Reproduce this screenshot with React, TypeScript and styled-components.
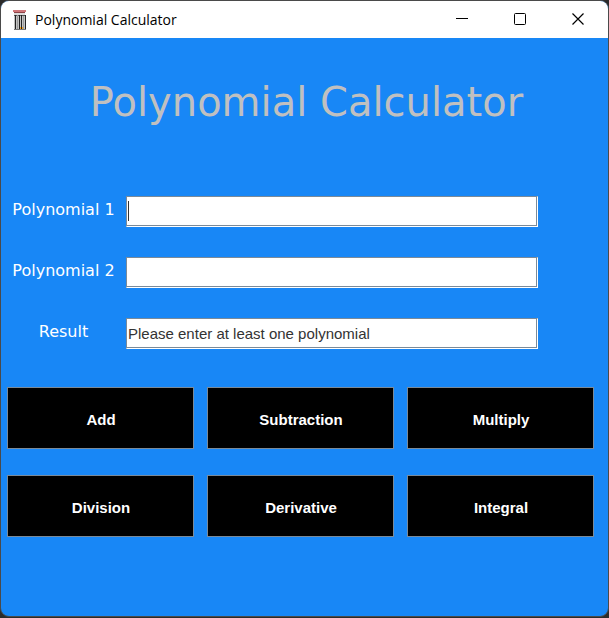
import React from "react";
import styled, { createGlobalStyle } from "styled-components";

const GlobalStyle = createGlobalStyle`
  *, *::before, *::after { box-sizing: border-box; }
  html, body, #root { height: 100%; }
  body { margin: 0; background: #2b2b2b; }
`;

const Window = styled.div`
  display: flex;
  flex-direction: column;
  height: calc(100% - 1px);
  border: 1px solid #4a4a4a;
  border-radius: 9px;
  overflow: hidden;
  background: #1887f6;
`;

const TitleBar = styled.header`
  display: flex;
  align-items: center;
  flex: none;
  height: 37px;
  padding: 0 1px 0 12px;
  background: #fff;
`;

const WindowTitle = styled.span`
  flex: 1;
  padding-left: 8px;
  color: #000;
  font: 14px/20px "Open Sans", "Noto Sans", sans-serif;
`;

const CaptionButton = styled.button`
  display: flex;
  align-items: center;
  justify-content: center;
  width: 58px;
  height: 37px;
  padding: 0 0 2px;
  border: 0;
  background: transparent;
`;

const Content = styled.main`
  display: flex;
  flex-direction: column;
  padding: 40px 14px 0 6px;
`;

const Heading = styled.h1`
  margin: 0 0 70px;
  padding-left: 12px;
  color: #c0c0c0;
  text-align: center;
  white-space: nowrap;
  font: 400 40px/48px Verdana, "DejaVu Sans", sans-serif;
`;

const Form = styled.form`
  display: flex;
  flex-direction: column;
`;

const Fields = styled.div`
  display: grid;
  row-gap: 30px;
  padding-right: 56px;
`;

const Row = styled.div`
  display: grid;
  grid-template-columns: 119px 1fr;
  align-items: center;
`;

const Label = styled.label`
  padding: 0 6px 4px 0;
  color: #fff;
  text-align: center;
  white-space: nowrap;
  font: 16px/20px Verdana, "DejaVu Sans", sans-serif;
`;

const FieldBox = styled.div`
  position: relative;
  display: flex;
`;

const Field = styled.input`
  width: 100%;
  height: 31px;
  padding: 0 2px 0 1px;
  border: 1px solid #fff;
  border-top-color: #7a8a99;
  border-left-color: #7a8a99;
  border-radius: 0;
  outline: 0;
  background: #fff;
  box-shadow: inset -1px -1px 0 #7a8a99;
  color: #333;
  font: 15px/20px Arial, "Liberation Sans", sans-serif;
`;

const Caret = styled.span`
  position: absolute;
  left: 2px;
  top: 5px;
  width: 1px;
  height: 20px;
  background: #333;
  pointer-events: none;

  ${Field}:focus + & { display: none; }
`;

const Actions = styled.div`
  display: grid;
  grid-template-columns: repeat(3, 1fr);
  gap: 26px 13px;
  margin-top: 38px;
`;

const ActionButton = styled.button`
  height: 62px;
  padding: 3px 0 0 1px;
  border: 1px solid #7a8a99;
  border-radius: 0;
  background: #000;
  color: #fff;
  font: bold 15px/20px Arial, "Liberation Sans", sans-serif;
`;

const AppIcon = () => (
  <svg width="14" height="20" viewBox="0 0 14 20" shapeRendering="crispEdges" aria-hidden="true">
    <rect x="0" y="0" width="13" height="2" fill="#d0767a" />
    <rect x="1" y="2" width="11" height="1" fill="#8d4448" />
    <rect x="1" y="3" width="11" height="2" fill="#dcdcdc" />
    <rect x="1" y="5" width="12" height="14" fill="#c4c4c4" />
    <path d="M1 5.5h12" stroke="#555" />
    <path d="M2 5v14M6 5v14M8 5v14M12 5v14" transform="translate(.5)" stroke="#222" />
    <path d="M4 5v14M10 6v13" transform="translate(.5)" stroke="#9a9a9a" />
    <rect x="7" y="17" width="1" height="2" fill="#f5a21b" />
    <rect x="9" y="17" width="1" height="2" fill="#f5a21b" />
    <path d="M1 19.5h12" stroke="#777" />
  </svg>
);

const fields = [
  { id: "polynomial-1", label: "Polynomial 1", value: "", caret: true },
  { id: "polynomial-2", label: "Polynomial 2", value: "", caret: false },
  { id: "result", label: "Result", value: "Please enter at least one polynomial", caret: false },
];

const actions = ["Add", "Subtraction", "Multiply", "Division", "Derivative", "Integral"];

export default function App() {
  return (
    <>
      <GlobalStyle />
      <Window>
        <TitleBar>
          <AppIcon />
          <WindowTitle>Polynomial Calculator</WindowTitle>
          <CaptionButton type="button" aria-label="Minimize">
            <svg width="12" height="12" viewBox="0 0 12 12">
              <path d="M0 5.5h12" stroke="#000" />
            </svg>
          </CaptionButton>
          <CaptionButton type="button" aria-label="Maximize">
            <svg width="12" height="12" viewBox="0 0 12 12">
              <rect x=".5" y=".5" width="11" height="11" rx="1" fill="none" stroke="#000" />
            </svg>
          </CaptionButton>
          <CaptionButton type="button" aria-label="Close">
            <svg width="12" height="12" viewBox="0 0 12 12">
              <path d="M.5.5l11 11M11.5.5l-11 11" stroke="#000" strokeWidth="1.2" />
            </svg>
          </CaptionButton>
        </TitleBar>
        <Content>
          <Heading>Polynomial Calculator</Heading>
          <Form onSubmit={(event) => event.preventDefault()}>
            <Fields>
              {fields.map(({ id, label, value, caret }) => (
                <Row key={id}>
                  <Label htmlFor={id}>{label}</Label>
                  <FieldBox>
                    <Field id={id} type="text" defaultValue={value} autoComplete="off" />
                    {caret && <Caret />}
                  </FieldBox>
                </Row>
              ))}
            </Fields>
            <Actions>
              {actions.map((name) => (
                <ActionButton key={name} type="button">
                  {name}
                </ActionButton>
              ))}
            </Actions>
          </Form>
        </Content>
      </Window>
    </>
  );
}
